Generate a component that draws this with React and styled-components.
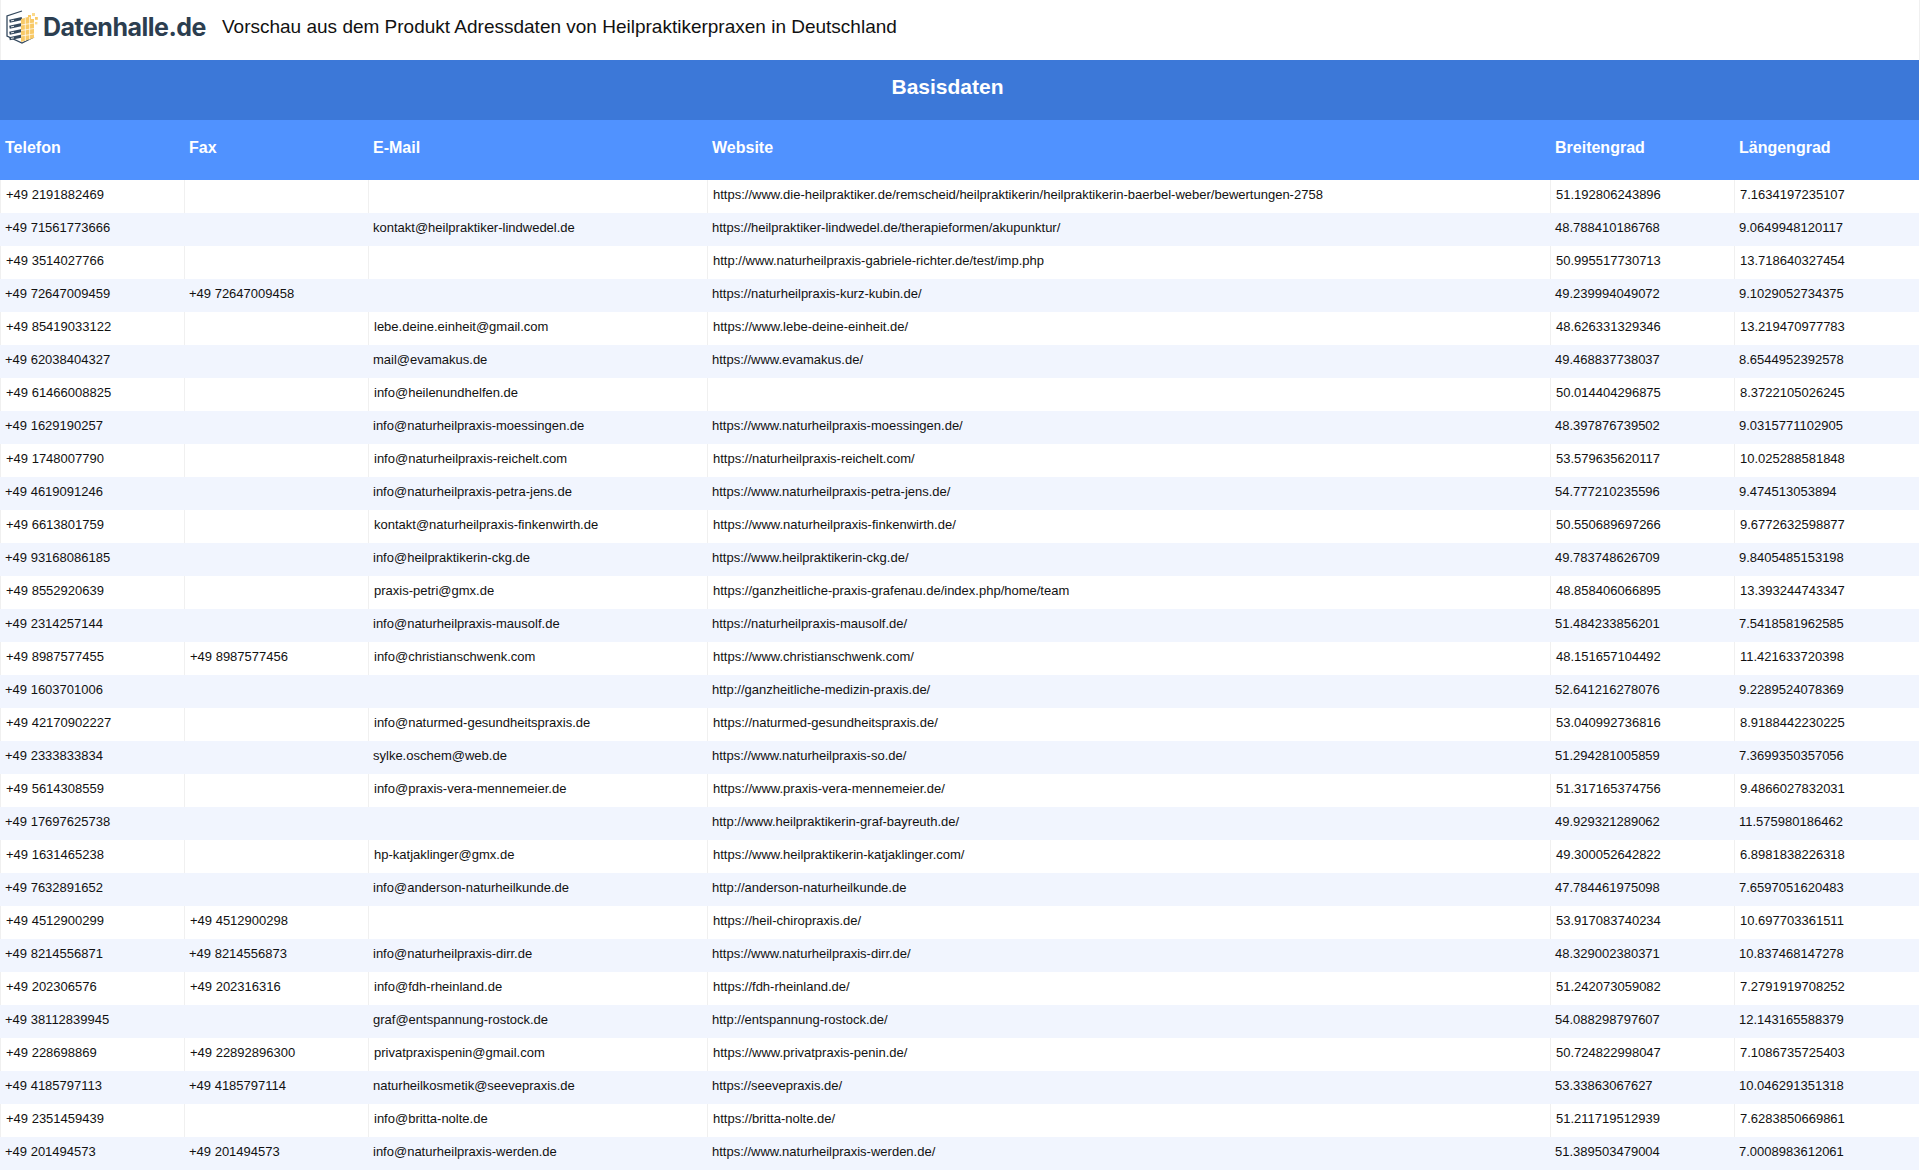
import React from "react";
import styled, { createGlobalStyle } from "styled-components";

const Global = createGlobalStyle`
  html, body { margin: 0; padding: 0; background: #fff; }
  body { font-family: "Liberation Sans", Arial, sans-serif; color: #111; height: 1170px; overflow: hidden; }
`;
const Page = styled.div`
  width: 1919px;
  display: flex;
  flex-direction: column;
`;
const TopBar = styled.header`
  height: 60px;
  display: flex;
  align-items: flex-start;
  box-sizing: border-box;
  padding: 10px 0 0 5px;
  border-left: 1px solid #f0f0f0;
  margin-right: -1px;
  border-right: 1px solid #f0f0f0;
`;
const LogoMark = styled.svg`
  width: 32px;
  height: 34px;
  flex: none;
`;
const LogoWord = styled.span`
  font-family: "Inter", sans-serif;
  font-weight: 700;
  font-size: 25px;
  line-height: 34px;
  letter-spacing: -0.5px;
  color: #2c3e50;
  margin-left: 5px;
`;
const PageTitle = styled.h1`
  margin: 0 0 0 16px;
  font-size: 19px;
  line-height: 33px;
  font-weight: 400;
  color: #111;
`;
const Table = styled.table`
  width: 100%;
  border-collapse: separate;
  border-spacing: 0;
  table-layout: fixed;
`;
const GroupCell = styled.th`
  height: 60px;
  padding: 0 24px 7px 0;
  box-sizing: border-box;
  background: #3c78d8;
  color: #fff;
  font-size: 21px;
  font-weight: 700;
  text-align: center;
  vertical-align: middle;
`;
const HeadCell = styled.th`
  height: 60px;
  padding: 0 5px 5px;
  background: #5092ff;
  color: #fff;
  font-size: 16px;
  font-weight: 700;
  text-align: left;
  box-sizing: border-box;
`;
const Row = styled.tr`
  height: 33px;
  background: ${(p) => (p.$even ? "#f1f5fe" : "#fff")};
`;
const Cell = styled.td`
  box-sizing: border-box;
  height: 33px;
  padding: 0 5px 4px;
  font-size: 13px;
  color: #111;
  white-space: nowrap;
  overflow: hidden;
  border-left: ${(p) => (p.$even ? "0" : "1px solid #f0f0f0")};
  border-bottom: 0;
`;

const widths = [184, 184, 339, 843, 184, 185];
const heads = ["Telefon", "Fax", "E-Mail", "Website", "Breitengrad", "Längengrad"];
const rows = [
  ["+49 2191882469", "", "", "https://www.die-heilpraktiker.de/remscheid/heilpraktikerin/heilpraktikerin-baerbel-weber/bewertungen-2758", "51.192806243896", "7.1634197235107"],
  ["+49 71561773666", "", "kontakt@heilpraktiker-lindwedel.de", "https://heilpraktiker-lindwedel.de/therapieformen/akupunktur/", "48.788410186768", "9.0649948120117"],
  ["+49 3514027766", "", "", "http://www.naturheilpraxis-gabriele-richter.de/test/imp.php", "50.995517730713", "13.718640327454"],
  ["+49 72647009459", "+49 72647009458", "", "https://naturheilpraxis-kurz-kubin.de/", "49.239994049072", "9.1029052734375"],
  ["+49 85419033122", "", "lebe.deine.einheit@gmail.com", "https://www.lebe-deine-einheit.de/", "48.626331329346", "13.219470977783"],
  ["+49 62038404327", "", "mail@evamakus.de", "https://www.evamakus.de/", "49.468837738037", "8.6544952392578"],
  ["+49 61466008825", "", "info@heilenundhelfen.de", "", "50.014404296875", "8.3722105026245"],
  ["+49 1629190257", "", "info@naturheilpraxis-moessingen.de", "https://www.naturheilpraxis-moessingen.de/", "48.397876739502", "9.0315771102905"],
  ["+49 1748007790", "", "info@naturheilpraxis-reichelt.com", "https://naturheilpraxis-reichelt.com/", "53.579635620117", "10.025288581848"],
  ["+49 4619091246", "", "info@naturheilpraxis-petra-jens.de", "https://www.naturheilpraxis-petra-jens.de/", "54.777210235596", "9.474513053894"],
  ["+49 6613801759", "", "kontakt@naturheilpraxis-finkenwirth.de", "https://www.naturheilpraxis-finkenwirth.de/", "50.550689697266", "9.6772632598877"],
  ["+49 93168086185", "", "info@heilpraktikerin-ckg.de", "https://www.heilpraktikerin-ckg.de/", "49.783748626709", "9.8405485153198"],
  ["+49 8552920639", "", "praxis-petri@gmx.de", "https://ganzheitliche-praxis-grafenau.de/index.php/home/team", "48.858406066895", "13.393244743347"],
  ["+49 2314257144", "", "info@naturheilpraxis-mausolf.de", "https://naturheilpraxis-mausolf.de/", "51.484233856201", "7.5418581962585"],
  ["+49 8987577455", "+49 8987577456", "info@christianschwenk.com", "https://www.christianschwenk.com/", "48.151657104492", "11.421633720398"],
  ["+49 1603701006", "", "", "http://ganzheitliche-medizin-praxis.de/", "52.641216278076", "9.2289524078369"],
  ["+49 42170902227", "", "info@naturmed-gesundheitspraxis.de", "https://naturmed-gesundheitspraxis.de/", "53.040992736816", "8.9188442230225"],
  ["+49 2333833834", "", "sylke.oschem@web.de", "https://www.naturheilpraxis-so.de/", "51.294281005859", "7.3699350357056"],
  ["+49 5614308559", "", "info@praxis-vera-mennemeier.de", "https://www.praxis-vera-mennemeier.de/", "51.317165374756", "9.4866027832031"],
  ["+49 17697625738", "", "", "http://www.heilpraktikerin-graf-bayreuth.de/", "49.929321289062", "11.575980186462"],
  ["+49 1631465238", "", "hp-katjaklinger@gmx.de", "https://www.heilpraktikerin-katjaklinger.com/", "49.300052642822", "6.8981838226318"],
  ["+49 7632891652", "", "info@anderson-naturheilkunde.de", "http://anderson-naturheilkunde.de", "47.784461975098", "7.6597051620483"],
  ["+49 4512900299", "+49 4512900298", "", "https://heil-chiropraxis.de/", "53.917083740234", "10.697703361511"],
  ["+49 8214556871", "+49 8214556873", "info@naturheilpraxis-dirr.de", "https://www.naturheilpraxis-dirr.de/", "48.329002380371", "10.837468147278"],
  ["+49 202306576", "+49 202316316", "info@fdh-rheinland.de", "https://fdh-rheinland.de/", "51.242073059082", "7.2791919708252"],
  ["+49 38112839945", "", "graf@entspannung-rostock.de", "http://entspannung-rostock.de/", "54.088298797607", "12.143165588379"],
  ["+49 228698869", "+49 22892896300", "privatpraxispenin@gmail.com", "https://www.privatpraxis-penin.de/", "50.724822998047", "7.1086735725403"],
  ["+49 4185797113", "+49 4185797114", "naturheilkosmetik@seevepraxis.de", "https://seevepraxis.de/", "53.33863067627", "10.046291351318"],
  ["+49 2351459439", "", "info@britta-nolte.de", "https://britta-nolte.de/", "51.211719512939", "7.6283850669861"],
  ["+49 201494573", "+49 201494573", "info@naturheilpraxis-werden.de", "https://www.naturheilpraxis-werden.de/", "51.389503479004", "7.0008983612061"],
];

function Logo() {
  const bars = [10, 16, 22, 27.5];
  return (
    <LogoMark viewBox="0 0 32 34" aria-hidden="true">
      <path d="M16 1 L1 6 V26 L16 33 L28 27" fill="none" stroke="#34495e" strokeWidth="1.3" />
      {bars.map((y) => (
        <g key={y}>
          <path d={`M3.5 ${y + 1.2} L16 ${y - 1.5}`} stroke="#34495e" strokeWidth="3" />
          <path d={`M5 ${y + 0.9} L8 ${y + 0.3}`} stroke="#fff" strokeWidth="0.9" />
        </g>
      ))}
      <path d="M15 9 L22 7 V5 L25 5 V9 L28 9 V28 L15 32 Z" fill="#f8c966" />
      <path d="M15 15 L28 13 M15 20.5 L28 18.5 M15 26 L28 24 M19.3 8 V31 M23.6 7 V29.5" stroke="#fff" strokeWidth="0.7" />
      <rect x="26" y="3" width="3" height="3" fill="#fbd98a" />
      <rect x="29" y="7" width="2.8" height="2.8" fill="#f8c966" />
      <rect x="29" y="12" width="2.4" height="2.4" fill="#fbd98a" />
    </LogoMark>
  );
}

export default function App() {
  return (
    <Page>
      <Global />
      <TopBar>
        <Logo />
        <LogoWord>Datenhalle.de</LogoWord>
        <PageTitle>Vorschau aus dem Produkt Adressdaten von Heilpraktikerpraxen in Deutschland</PageTitle>
      </TopBar>
      <Table>
        <colgroup>
          {widths.map((w, i) => (
            <col key={i} style={{ width: w }} />
          ))}
        </colgroup>
        <thead>
          <tr>
            <GroupCell colSpan={6}>Basisdaten</GroupCell>
          </tr>
          <tr>
            {heads.map((h) => (
              <HeadCell key={h}>{h}</HeadCell>
            ))}
          </tr>
        </thead>
        <tbody>
          {rows.map((r, i) => (
            <Row key={i} $even={i % 2 === 1}>
              {r.map((c, j) => (
                <Cell key={j} $even={i % 2 === 1}>{c}</Cell>
              ))}
            </Row>
          ))}
        </tbody>
      </Table>
    </Page>
  );
}
